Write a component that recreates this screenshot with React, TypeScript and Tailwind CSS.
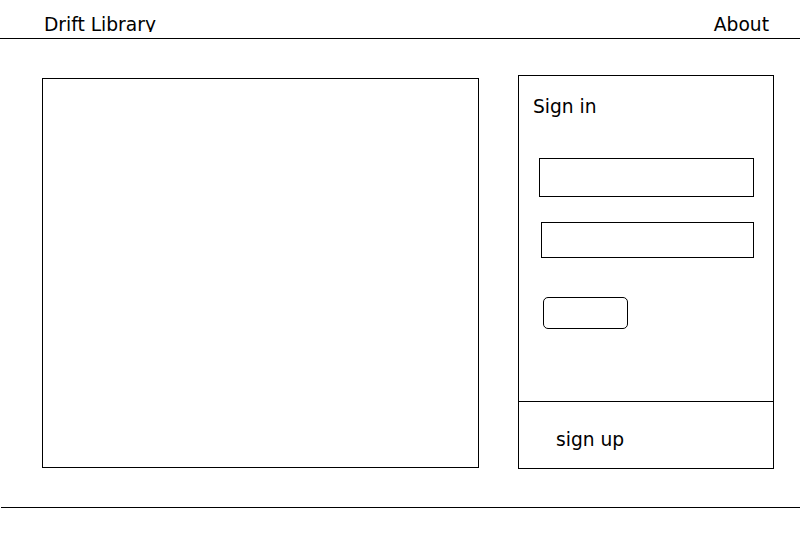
export default function App() {
  return (
    <div className="w-[800px] h-[554px] bg-white text-black text-[18.67px] leading-[22px] font-['DejaVu_Sans',sans-serif]">
      <header className="h-[39px] border-b border-black">
        <div className="h-[32px] overflow-hidden pt-[14px] pl-[44px] pr-[31px] flex justify-between">
          <span>Drift Library</span>
          <span>About</span>
        </div>
      </header>

      <main className="flex items-start pl-[42px]">
        <div className="mt-[39px] w-[437px] h-[390px] border border-black" />

        <div className="ml-[39px] mt-[36px] w-[256px] h-[394px] border border-black flex flex-col">
          <div className="h-[326px] border-b border-black pt-[20px] pl-[14px] flex flex-col items-start">
            <span>Sign in</span>
            <input className="mt-[40px] ml-[6px] w-[215px] h-[39px] border border-black outline-none" />
            <input className="mt-[25px] ml-[8px] w-[213px] h-[36px] border border-black outline-none" />
            <button className="mt-[39px] ml-[10px] w-[85px] h-[32px] border border-black rounded-[5px]" />
          </div>
          <div className="flex-1 pt-[27px] pl-[37px]">
            <span>sign up</span>
          </div>
        </div>
      </main>

      <footer className="mt-[38px] ml-px border-t border-black" />
    </div>
  );
}
